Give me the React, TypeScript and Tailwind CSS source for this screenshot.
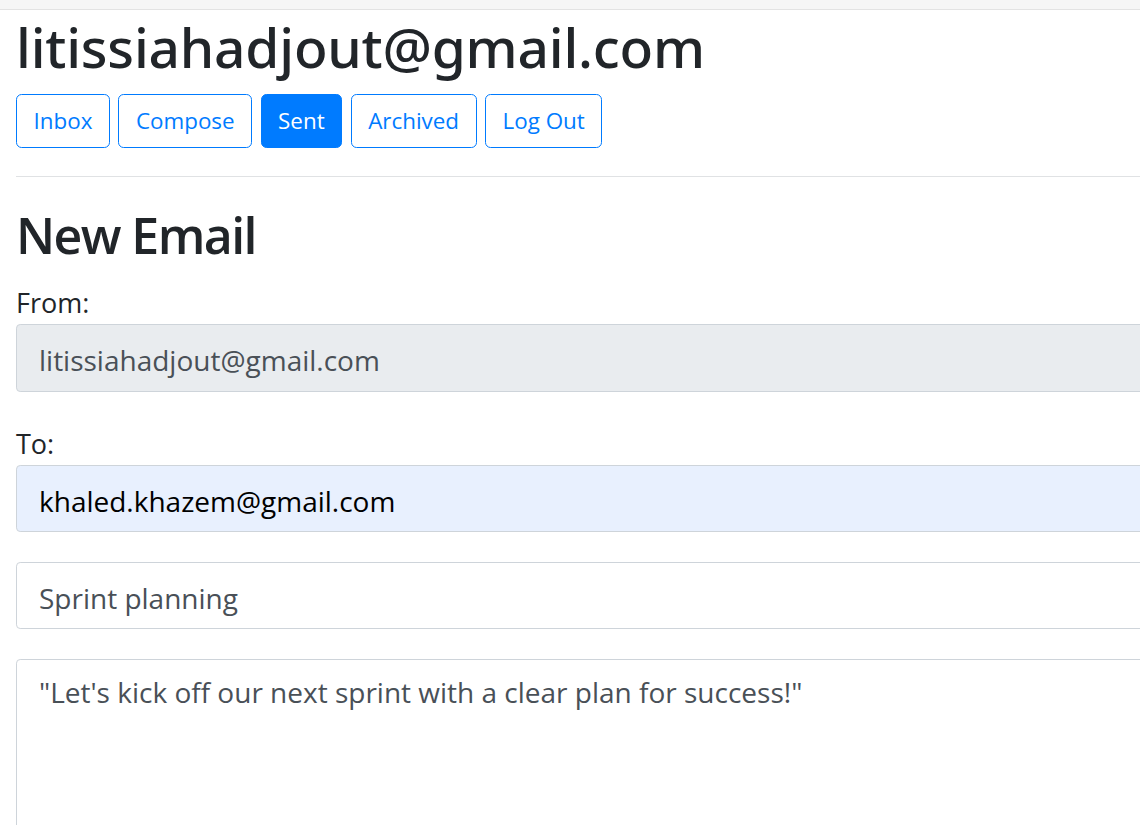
import { useState } from "react";

const navItems = ["Inbox", "Compose", "Sent", "Archived", "Log Out"];

function NavButton({ text, active }: { text: string; active?: boolean }) {
    return (
        <button
            className={
                "h-[54px] px-[16.5px] text-[22.4px] leading-[33.6px] border border-[#007bff] rounded-[5.6px] " +
                (active ? "bg-[#007bff] text-white" : "bg-white text-[#007bff]")
            }
        >
            {text}
        </button>
    );
}

export default function App() {
    const [to, setTo] = useState("khaled.khazem@gmail.com");
    const [subject, setSubject] = useState("Sprint planning");
    const [body, setBody] = useState(
        "\"Let's kick off our next sprint with a clear plan for success!\""
    );

    return (
        <div className="w-full min-h-screen overflow-hidden bg-white text-[#212529] font-['Open_Sans',sans-serif]">
            <div className="h-[10px] bg-[#f6f6f6] border-b border-[#e3e3e3]" />
            <div className="w-[1300px] px-[16px]">
                <h1 className="mt-[3px] text-[55px] leading-[67px] font-medium font-['Noto_Sans',sans-serif] tracking-[-0.2px]">
                    litissiahadjout@gmail.com
                </h1>
                <div className="mt-[14px] flex gap-[8.5px]">
                    {navItems.map((item) => (
                        <NavButton key={item} text={item} active={item === "Sent"} />
                    ))}
                </div>
                <hr className="mt-[28px] border-t border-[#e0e2e4]" />

                <h2 className="mt-[25px] text-[50px] leading-[67px] font-semibold tracking-[-1.6px]">
                    New Email
                </h2>
                <form className="flex flex-col">
                    <label className="mt-[17px] mb-[4px] text-[27px] leading-[34px]">
                        From:
                    </label>
                    <input
                        readOnly
                        value="litissiahadjout@gmail.com"
                        className="h-[68px] px-[22px] pt-[4px] text-[28px] text-[#495057] bg-[#e9ecef] border border-[#ced4da] rounded-[4.2px] outline-none"
                    />
                    <label className="mt-[35px] mb-[4px] text-[27px] leading-[34px]">
                        To:
                    </label>
                    <input
                        value={to}
                        onChange={(e) => setTo(e.target.value)}
                        className="h-[67px] px-[22px] pt-[4px] text-[28px] text-black bg-[#e8f0fe] border border-[#ced4da] rounded-[4.2px] outline-none"
                    />
                    <input
                        value={subject}
                        onChange={(e) => setSubject(e.target.value)}
                        className="mt-[30px] h-[67px] px-[22px] pt-[4px] text-[28px] text-[#495057] bg-white border border-[#ced4da] rounded-[4.2px] outline-none"
                    />
                    <textarea
                        value={body}
                        onChange={(e) => setBody(e.target.value)}
                        className="mt-[30px] h-[240px] px-[22px] py-[11px] text-[28px] leading-[42px] text-[#495057] bg-white border border-[#ced4da] rounded-[4.2px] outline-none resize-none"
                    />
                </form>
            </div>
        </div>
    );
}
